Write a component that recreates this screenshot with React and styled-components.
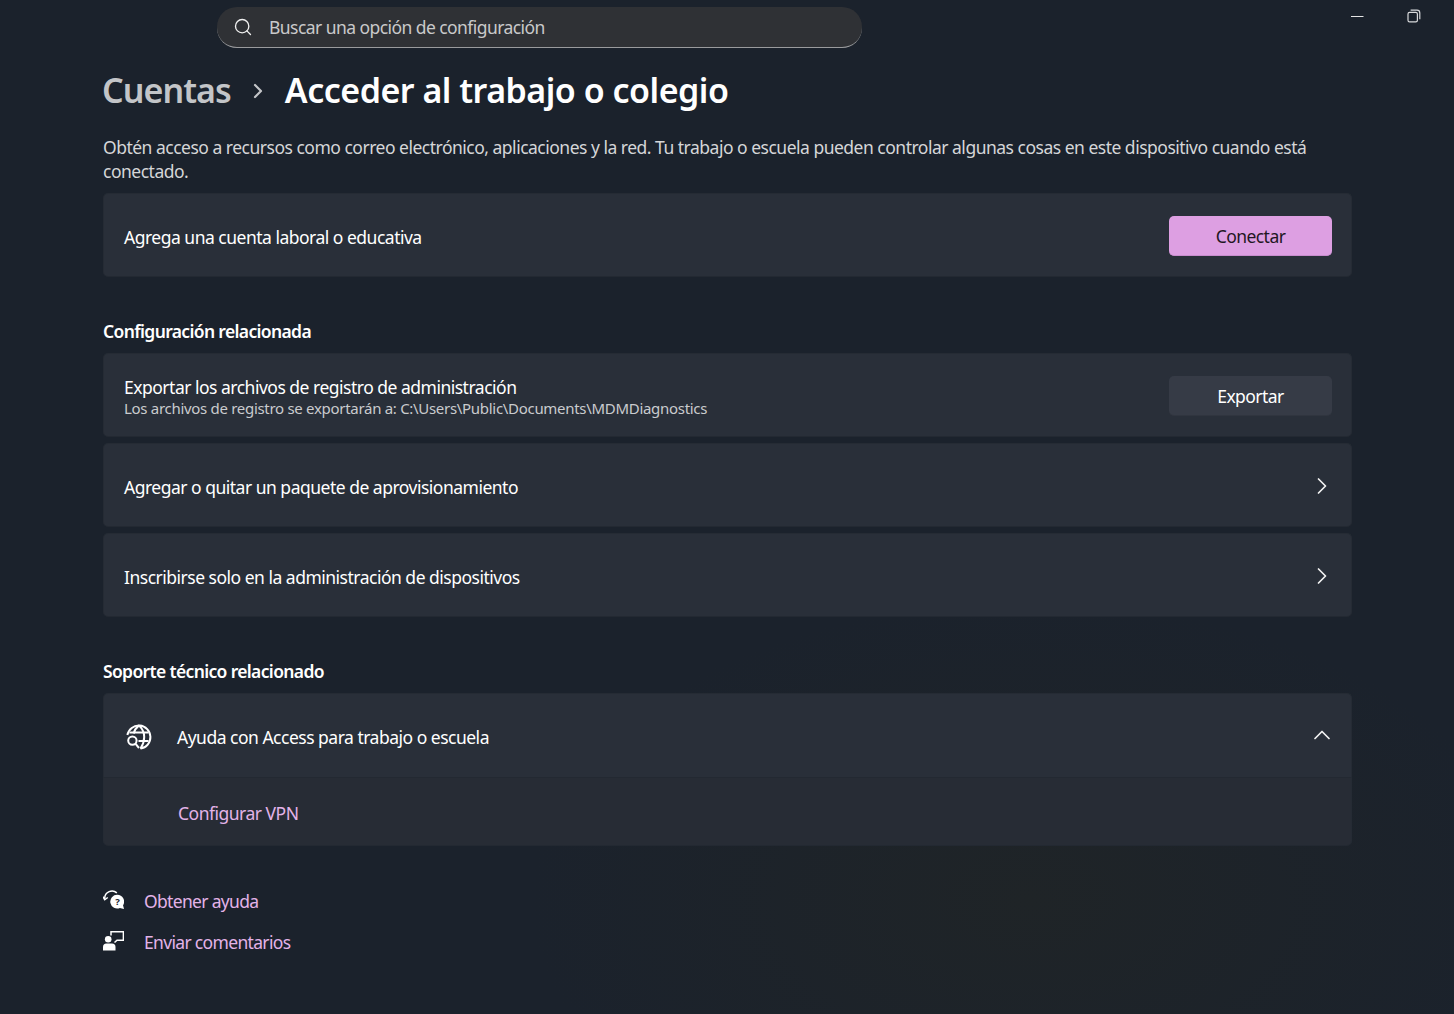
import React from "react"
import styled, { createGlobalStyle } from "styled-components"
import { Search, ChevronRight, ChevronUp } from "lucide-react"

const GlobalStyle = createGlobalStyle`
  html, body {
    margin: 0;
    height: 100%;
    background: #1b222c;
  }
  * {
    box-sizing: border-box;
  }
`

const Page = styled.div`
  width: 1454px;
  height: 1014px;
  overflow: hidden;
  background: radial-gradient(ellipse 500px 300px at 1030px 900px, #1f2427 0%, #1b222c 100%);
  color: #fff;
  font-family: "Noto Sans", "Open Sans", sans-serif;
  font-size: 17.5px;
  letter-spacing: -0.5px;
`

const TopBar = styled.div`
  display: flex;
  justify-content: space-between;
  height: 48px;
  padding: 7px 0 0 217px;
`

const SearchBox = styled.div`
  display: flex;
  align-items: center;
  gap: 16px;
  width: 645px;
  height: 41px;
  padding: 0 16px;
  border-radius: 20px;
  background: #2f3135;
  border-bottom: 1px solid #9a9b9d;
  color: #c9c9ca;
  letter-spacing: -0.56px;
  svg {
    color: #f0f0f0;
  }
`

const WindowControls = styled.div`
  display: flex;
  align-items: flex-start;
  gap: 42px;
  padding: 2px 33px 0 0;
`

const Content = styled.main`
  padding: 0 102px 0 103px;
`

const Breadcrumb = styled.h1`
  display: flex;
  align-items: center;
  height: 46px;
  margin: 19px 0 22px;
  font-size: 34px;
  font-weight: 600;
  letter-spacing: -0.5px;
`

const Parent = styled.span`
  margin-left: -1px;
  color: #c3c5c8;
  letter-spacing: -0.95px;
`

const Crumb = styled.span`
  display: flex;
  margin: 2px 15px 0 15px;
  color: #c3c5c8;
`

const Description = styled.p`
  margin: 0 0 10px;
  line-height: 24px;
  color: #d5d6d8;
`

const Card = styled.section`
  display: flex;
  align-items: center;
  justify-content: space-between;
  height: ${p => p.$height || 84}px;
  margin-bottom: ${p => p.$gap || 0}px;
  padding: 2px 19px 0 20px;
  background: #292f39;
  border: 1px solid #252b34;
  border-bottom-color: #232932;
  border-radius: ${p => p.$radius || "5px"};
`

const Label = styled.div`
  display: flex;
  flex-direction: column;
  padding-top: ${p => (p.$twoLine ? 0 : 2)}px;
`

const Sub = styled.span`
  margin-top: -1px;
  font-size: 15px;
  line-height: 20px;
  letter-spacing: -0.3px;
  color: #c9cbce;
`

const Button = styled.button`
  width: 163px;
  height: 40px;
  padding: 0;
  border: 0;
  border-radius: 5px;
  font: inherit;
  letter-spacing: -0.55px;
  color: ${p => (p.$primary ? "#1f1722" : "#fff")};
  background: ${p => (p.$primary ? "#dd9fe2" : "#363b46")};
  border-bottom: 1px solid ${p => (p.$primary ? "#c88ccd" : "#30353f")};
`

const Heading = styled.h2`
  margin: 42px 0 10px;
  height: 24px;
  font-size: 17.5px;
  line-height: 24px;
  font-weight: 600;
  letter-spacing: -0.65px;
`

const Chevron = styled.span`
  display: flex;
  margin: 0 -4px ${p => (p.$up ? 3 : 0)}px 0;
  color: #f2f2f2;
`

const IconRow = styled.div`
  display: flex;
  align-items: center;
  gap: 25px;
  padding-top: 1px;
`

const Accent = styled.a`
  color: #e3b3e8;
  text-decoration: none;
`

const SubRow = styled.div`
  display: flex;
  align-items: center;
  height: 68px;
  padding: 2px 0 0 74px;
  background: #272c35;
  border: 1px solid #252b34;
  border-top: 0;
  border-bottom-color: #232932;
  border-radius: 0 0 5px 5px;
`

const Footer = styled.div`
  display: flex;
  flex-direction: column;
  gap: 17px;
  margin-top: 43px;
  letter-spacing: -0.67px;
`

const FooterLink = styled.div`
  display: flex;
  align-items: center;
  gap: 20px;
  height: 24px;
`

const IconSlot = styled.span`
  display: flex;
  flex: none;
  width: 21px;
  margin-top: -3px;
`

const GlobeIcon = () => (
  <svg width="28" height="28" viewBox="0 0 28 28" fill="none" stroke="#fff" strokeWidth="2">
    <path d="M3.4 12A11.6 11.6 0 1 1 16.5 25.6" />
    <path d="M15 2.4C12 4.8 10.4 7.4 9.8 10.5M15 2.4c3.6 3.2 5.2 7 5.2 11.6 0 4.4-1.4 8-3.7 11.6" />
    <path d="M5.4 9.5h19.2M14.5 18h10.1" />
    <circle cx="8.4" cy="17.6" r="4.2" />
    <path d="M11.4 20.6 15 25" />
  </svg>
)

const HelpIcon = () => (
  <svg width="22" height="21" viewBox="0 0 22 21" fill="none">
    <path d="M1.8 10.5V9A7.6 7.6 0 0 1 14.5 3.6" stroke="#fff" strokeWidth="1.6" />
    <path d="M0 7.5 1.8 10.8 5 8.4" stroke="#fff" strokeWidth="1.5" />
    <path d="M15 5.5a7.2 7.2 0 0 1 6 11l1 4-4.3-1.2A7.2 7.2 0 1 1 15 5.5Z" fill="#fff" />
    <text x="15" y="16.4" textAnchor="middle" fontSize="10" fontWeight="700" fontFamily="Noto Sans" fill="#1b222c">?</text>
  </svg>
)

const FeedbackIcon = () => (
  <svg width="21" height="20" viewBox="0 0 21 20" fill="none">
    <circle cx="5.2" cy="8.2" r="3.3" fill="#fff" />
    <path d="M0 19.5V16a3.5 3.5 0 0 1 3.5-3.5h5.5A3.5 3.5 0 0 1 12.5 16v3.5Z" fill="#fff" />
    <path d="M8 4.5V.8h12.4v8.4H14l-2.5 2.3" stroke="#fff" strokeWidth="1.5" />
  </svg>
)

const RestoreIcon = () => (
  <svg width="14" height="14" viewBox="0 0 14 14" fill="none" stroke="#d8d9db" strokeWidth="1.2">
    <rect x="1" y="3.4" width="9.4" height="9.4" rx="1.6" />
    <path d="M3.6 1.2h6.4A2.8 2.8 0 0 1 12.8 4v6.2" />
  </svg>
)

const MinimizeIcon = () => (
  <svg width="14" height="14" viewBox="0 0 14 14" stroke="#e4e4e5" strokeWidth="1">
    <path d="M0 7.5h12.5" />
  </svg>
)

const App = () => {
  return (
    <Page>
      <GlobalStyle />
      <TopBar>
        <SearchBox>
          <Search size={20} strokeWidth={1.6} />
          <span>Buscar una opción de configuración</span>
        </SearchBox>
        <WindowControls>
          <MinimizeIcon />
          <RestoreIcon />
        </WindowControls>
      </TopBar>
      <Content>
        <Breadcrumb>
          <Parent>Cuentas</Parent>
          <Crumb>
            <ChevronRight size={24} strokeWidth={2.2} />
          </Crumb>
          <span>Acceder al trabajo o colegio</span>
        </Breadcrumb>
        <Description>
          Obtén acceso a recursos como correo electrónico, aplicaciones y la red. Tu trabajo o escuela pueden controlar algunas cosas en este dispositivo cuando está conectado.
        </Description>
        <Card>
          <Label>Agrega una cuenta laboral o educativa</Label>
          <Button $primary>Conectar</Button>
        </Card>

        <Heading>Configuración relacionada</Heading>
        <Card $gap={6}>
          <Label $twoLine>
            Exportar los archivos de registro de administración
            <Sub>Los archivos de registro se exportarán a: C:\Users\Public\Documents\MDMDiagnostics</Sub>
          </Label>
          <Button>Exportar</Button>
        </Card>
        <Card $gap={6}>
          <Label>Agregar o quitar un paquete de aprovisionamiento</Label>
          <Chevron><ChevronRight size={28} strokeWidth={1.5} /></Chevron>
        </Card>
        <Card>
          <Label>Inscribirse solo en la administración de dispositivos</Label>
          <Chevron><ChevronRight size={28} strokeWidth={1.5} /></Chevron>
        </Card>

        <Heading>Soporte técnico relacionado</Heading>
        <Card $height={85} $radius="5px 5px 0 0">
          <IconRow>
            <GlobeIcon />
            Ayuda con Access para trabajo o escuela
          </IconRow>
          <Chevron $up><ChevronUp size={28} strokeWidth={1.5} /></Chevron>
        </Card>
        <SubRow>
          <Accent>Configurar VPN</Accent>
        </SubRow>

        <Footer>
          <FooterLink>
            <IconSlot><HelpIcon /></IconSlot>
            <Accent>Obtener ayuda</Accent>
          </FooterLink>
          <FooterLink>
            <IconSlot><FeedbackIcon /></IconSlot>
            <Accent>Enviar comentarios</Accent>
          </FooterLink>
        </Footer>
      </Content>
    </Page>
  )
}

export default App
